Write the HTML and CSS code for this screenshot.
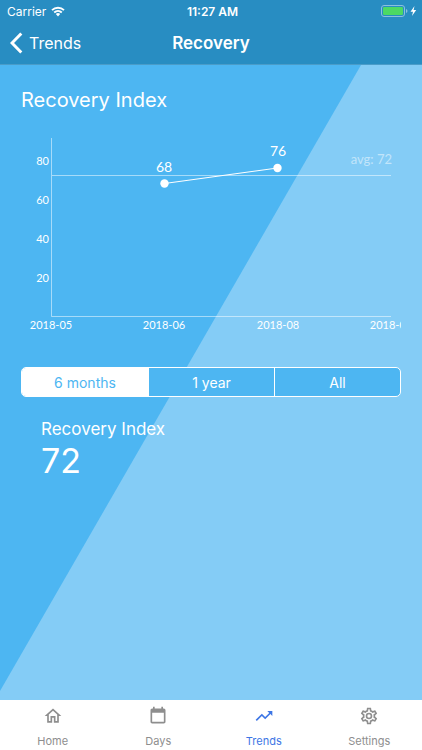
FILE: index.html
```html
<!DOCTYPE html>
<html lang="en">
<head>
<meta charset="utf-8">
<meta name="viewport" content="width=device-width, initial-scale=1">
<title>Recovery</title>
<link rel="stylesheet" href="styles.css">
</head>
<body>
<div class="app">
  <header class="header">
    <div class="status">
      <div class="carrier">
        <span>Carrier</span>
        <svg class="wifi" viewBox="0 0 14 11" aria-hidden="true">
          <path d="M1 4.2a8.6 8.6 0 0 1 12 0M3.2 6.5a5.5 5.5 0 0 1 7.6 0" fill="none" stroke="currentColor" stroke-width="1.8"/>
          <path d="M4.8 8.1a3.1 3.1 0 0 1 4.4 0L7 10.4z" fill="currentColor"/>
        </svg>
      </div>
      <time class="clock">11:27 AM</time>
      <svg class="battery" viewBox="0 0 37 12" aria-label="Battery charging">
        <rect x="0.5" y="0.5" width="23" height="11" rx="2.5" fill="none" stroke="#8bc0de"/>
        <rect x="2" y="2" width="20" height="8" rx="1.2" fill="#4cd964"/>
        <path d="M25 4v4q1.5-.6 1.5-2T25 4z" fill="#8bc0de"/>
        <path d="M33.5 1 29.5 6.7h2.5L31 11l4.2-6h-2.6z" fill="#fff"/>
      </svg>
    </div>
    <nav class="navbar">
      <a class="back" href="#trends">
        <svg class="chevron" viewBox="0 0 13 22" aria-hidden="true"><path d="M11.3 1.5 2 11l9.3 9.5" fill="none" stroke="currentColor" stroke-width="3"/></svg>
        <span>Trends</span>
      </a>
      <h1 class="title">Recovery</h1>
    </nav>
  </header>

  <main class="content">
    <h2 class="heading">Recovery Index</h2>
    <svg class="chart" viewBox="0 0 380 217" role="img" aria-label="Recovery index by month">
      <path class="axis" d="M30.5 8V186.500H370"/>
      <path class="average" d="M31 45.500H370"/>
      <path class="series" d="M143.500 53.500 256.500 38"/>
      <circle class="dot" cx="143.500" cy="53.500" r="4.200"/>
      <circle class="dot" cx="256.500" cy="38" r="4.200"/>
      <g class="scale">
        <text x="28" y="35">80</text>
        <text x="28" y="74">60</text>
        <text x="28" y="113">40</text>
        <text x="28" y="152">20</text>
      </g>
      <g class="dates">
        <text x="30" y="199">2018-05</text>
        <text x="143" y="199">2018-06</text>
        <text x="257" y="199">2018-08</text>
        <text x="370" y="199">2018-09</text>
      </g>
      <g class="values">
        <text x="143" y="42">68</text>
        <text x="257" y="26">76</text>
      </g>
      <text class="average-label" x="371" y="34">avg: 72</text>
    </svg>

    <div class="segments" role="group" aria-label="Period">
      <button class="segment selected" type="button" aria-pressed="true">6 months</button>
      <button class="segment" type="button" aria-pressed="false">1 year</button>
      <button class="segment" type="button" aria-pressed="false">All</button>
    </div>

    <section class="stat">
      <h3 class="stat-label">Recovery Index</h3>
      <p class="stat-value">72</p>
    </section>
  </main>

  <nav class="tabs" aria-label="Main">
    <a class="tab" href="#home">
      <svg class="tab-icon" viewBox="0 0 24 24" aria-hidden="true"><path d="M12 5.690 17 10.190V18H15V12H9V18H7V10.190L12 5.690M12 3 2 12H5V20H11V14H13V20H19V12H22L12 3Z"/></svg>
      <span>Home</span>
    </a>
    <a class="tab" href="#days">
      <svg class="tab-icon" viewBox="0 0 24 24" aria-hidden="true"><path d="M19 19H5V8H19M16 1V3H8V1H6V3H5C3.890 3 3 3.890 3 5V19C3 20.100 3.900 21 5 21H19C20.100 21 21 20.100 21 19V5C21 3.890 20.100 3 19 3H18V1"/></svg>
      <span>Days</span>
    </a>
    <a class="tab active" href="#trends" aria-current="page">
      <svg class="tab-icon" viewBox="0 0 24 24" aria-hidden="true"><path d="M16 6l2.290 2.290-4.880 4.880-4-4L2 16.590 3.410 18l6-6 4 4 6.300-6.290L22 12V6h-6z"/></svg>
      <span>Trends</span>
    </a>
    <a class="tab" href="#settings">
      <svg class="tab-icon" viewBox="0 0 24 24" aria-hidden="true"><path d="M12,8A4,4 0 0,1 16,12A4,4 0 0,1 12,16A4,4 0 0,1 8,12A4,4 0 0,1 12,8M12,10A2,2 0 0,0 10,12A2,2 0 0,0 12,14A2,2 0 0,0 14,12A2,2 0 0,0 12,10M10,22C9.75,22 9.54,21.82 9.5,21.58L9.13,18.93C8.5,18.68 7.96,18.34 7.44,17.94L4.95,18.95C4.73,19.03 4.46,18.95 4.34,18.73L2.34,15.27C2.21,15.05 2.27,14.78 2.46,14.63L4.57,12.97L4.5,12L4.57,11L2.46,9.37C2.27,9.22 2.21,8.95 2.34,8.73L4.34,5.27C4.46,5.05 4.73,4.96 4.95,5.05L7.44,6.05C7.96,5.66 8.5,5.32 9.13,5.07L9.5,2.42C9.54,2.18 9.75,2 10,2H14C14.25,2 14.46,2.18 14.5,2.42L14.87,5.07C15.5,5.32 16.04,5.66 16.56,6.05L19.05,5.05C19.27,4.96 19.54,5.05 19.66,5.27L21.66,8.73C21.79,8.95 21.73,9.22 21.54,9.37L19.43,11L19.5,12L19.43,13L21.54,14.63C21.73,14.78 21.79,15.05 21.66,15.27L19.66,18.73C19.54,18.95 19.27,19.04 19.05,18.95L16.56,17.95C16.04,18.34 15.5,18.68 14.87,18.93L14.5,21.58C14.46,21.82 14.25,22 14,22H10M11.25,4L10.88,6.61C9.68,6.86 8.62,7.5 7.85,8.39L5.44,7.35L4.69,8.65L6.8,10.2C6.4,11.37 6.4,12.64 6.8,13.8L4.68,15.36L5.43,16.66L7.86,15.62C8.63,16.5 9.68,17.14 10.87,17.38L11.24,20H12.76L13.13,17.39C14.32,17.14 15.37,16.5 16.14,15.62L18.57,16.66L19.32,15.36L17.2,13.81C17.6,12.64 17.6,11.37 17.2,10.2L19.31,8.65L18.56,7.35L16.15,8.39C15.38,7.5 14.32,6.86 13.12,6.62L12.75,4H11.25Z"/></svg>
      <span>Settings</span>
    </a>
  </nav>
</div>
</body>
</html>
```
FILE: styles.css
```css
* {
  box-sizing: border-box;
}

body,
h1,
h2,
h3,
p {
  margin: 0;
  font-weight: 400;
}

body {
  font-family: Inter, "Liberation Sans", sans-serif;
  color: #fff;
}

a {
  color: inherit;
  text-decoration: none;
}

svg {
  display: block;
}

.app {
  display: flex;
  flex-direction: column;
  min-height: 100vh;
}

.header {
  background: #288dc2;
  border-bottom: 1px solid #4a9cc9;
}

.status,
.navbar {
  display: grid;
  grid-template-columns: 1fr auto 1fr;
  align-items: center;
}

.status {
  height: 22px;
  padding: 0 4px 0 7px;
  font-size: 12px;
}

.carrier {
  display: flex;
  align-items: center;
  gap: 5px;
}

.wifi {
  width: 14px;
  height: 11px;
}

.clock {
  font-weight: 600;
}

.battery {
  justify-self: end;
  width: 37px;
  height: 12px;
}

.navbar {
  height: 42px;
  padding: 0 10px;
}

.back {
  display: flex;
  align-items: center;
  gap: 6px;
  font-size: 16px;
}

.chevron {
  width: 13px;
  height: 22px;
}

.title {
  font-size: 17px;
  font-weight: 600;
}

.content {
  position: relative;
  z-index: 0;
  flex: 1;
  padding: 20px 21px;
  background: #4db6f2;
}

/* Pale diagonal band behind the content */
.content::before {
  content: "";
  position: absolute;
  inset: 0;
  z-index: -1;
  background: #84ccf6;
  clip-path: polygon(calc(100% - 61px) 0, 100% 0, 100% 100%, 0 100%, 0 calc(100% - 9px));
}

.heading {
  font-size: 20px;
  line-height: 30px;
}

.chart {
  width: 100%;
  margin: 15px 0 20px;
  overflow: hidden;
  font-family: Lato, "Open Sans", sans-serif;
  font-size: 11px;
  fill: #fff;
}

.axis,
.average {
  fill: none;
  stroke: #fff;
  stroke-opacity: 0.5;
}

.series {
  stroke: #fff;
}

.scale {
  text-anchor: end;
}

.dates,
.values {
  text-anchor: middle;
}

.values {
  font-size: 14px;
}

.average-label {
  font-size: 13px;
  text-anchor: end;
  fill-opacity: 0.5;
}

.segments {
  display: grid;
  grid-template-columns: repeat(3, 1fr);
  height: 30px;
  border: 1px solid #fff;
  border-radius: 5px;
  background: #4db6f2;
  overflow: hidden;
}

.segment {
  padding: 0;
  border: 0;
  border-left: 1px solid #fff;
  background: transparent;
  color: #fff;
  font: inherit;
  font-size: 14px;
}

.segment.selected {
  border-left: 0;
  background: #fff;
  color: #4db6f2;
}

.stat {
  padding: 20px 20px 0;
}

.stat-label {
  font-size: 17px;
  line-height: 24px;
}

.stat-value {
  font-size: 34px;
  line-height: 40px;
}

.tabs {
  display: grid;
  grid-template-columns: repeat(4, 1fr);
  height: 50px;
  background: #fff;
}

.tab {
  display: flex;
  flex-direction: column;
  align-items: center;
  gap: 8px;
  padding-top: 6px;
  color: #8e8e8e;
  font-size: 11px;
  line-height: 14px;
}

.tab-icon {
  width: 20px;
  height: 20px;
  fill: currentColor;
}

.tab.active {
  color: #3d76e5;
}
```
